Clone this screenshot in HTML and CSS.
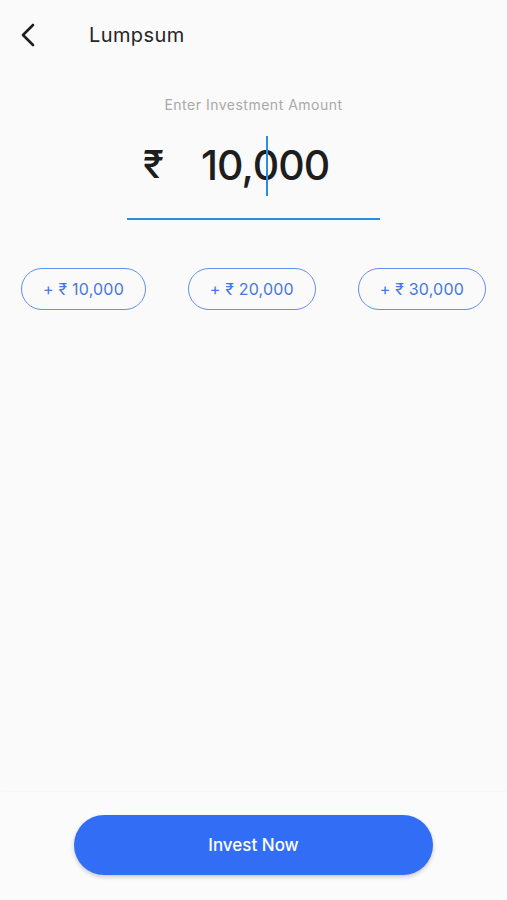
FILE: index.html
```html
<!DOCTYPE html>
<html lang="en">
<head>
  <meta charset="UTF-8" />
  <meta name="viewport" content="width=device-width, initial-scale=1.0"/>
  <title>Lumpsum</title>
  <link rel="stylesheet" href="styles.css">
</head>
<body>
  <div class="screen">
    <!-- Top bar -->
    <header class="topbar">
      <button class="back" aria-label="Back">
        <svg width="18" height="24" viewBox="0 0 18 24">
          <path d="M14 2 L4 12 L14 22" fill="none" stroke="#1e1e1e" stroke-width="2.6" stroke-linecap="round" stroke-linejoin="round"/>
        </svg>
      </button>
      <h1 class="title">Lumpsum</h1>
    </header>

    <!-- Amount entry -->
    <main class="content">
      <p class="label">Enter Investment Amount</p>
      <div class="amount-field">
        <span class="prefix">₹</span>
        <span class="value">10,<span class="caret"></span>000</span>
      </div>

      <div class="chips">
        <button class="chip">+ ₹ 10,000</button>
        <button class="chip">+ ₹ 20,000</button>
        <button class="chip">+ ₹ 30,000</button>
      </div>
    </main>

    <footer class="bottom">
      <button class="invest">Invest Now</button>
    </footer>
  </div>
</body>
</html>
```

FILE: styles.css
```css
html, body {
  margin: 0;
  padding: 0;
  background: #fafafa;
  font-family: Inter, 'Noto Sans', sans-serif;
  color: #1d1d1d;
}

.screen {
  height: 900px;
  display: flex;
  flex-direction: column;
}

.topbar {
  height: 70px;
  display: flex;
  align-items: center;
  padding-left: 17px;
}

.back {
  background: none;
  border: none;
  padding: 0;
  width: 22px;
  height: 24px;
  cursor: pointer;
}

.title {
  margin: 0 0 0 50px;
  font-size: 20px;
  font-weight: 400;
  letter-spacing: 0.4px;
  color: #262626;
}

.content {
  flex: 1;
  display: flex;
  flex-direction: column;
  align-items: center;
}

.label {
  margin: 26px 0 0;
  font-size: 14px;
  color: #a9a9a9;
  letter-spacing: 0.5px;
}

.amount-field {
  width: 253px;
  height: 99px;
  margin-top: 8px;
  border-bottom: 2px solid #2b8de0;
  display: flex;
  align-items: center;
  box-sizing: border-box;
  padding: 0 0 11px 16px;
}

.prefix {
  font-size: 38px;
  font-weight: 500;
  width: 58px;
}

.value {
  font-size: 41px;
  font-weight: 500;
  letter-spacing: -1px;
}

.caret {
  position: relative;
  display: inline-block;
  width: 0;
  height: 1em;
}

.caret::after {
  content: "";
  position: absolute;
  left: 13px;
  top: -3px;
  width: 2px;
  height: 60px;
  background: #2b8de0;
}

.chips {
  align-self: stretch;
  display: flex;
  justify-content: space-between;
  padding: 0 21px;
  margin-top: 48px;
}

.chip {
  height: 42px;
  padding: 0 21px;
  border: 1.5px solid #6390e8;
  border-radius: 21px;
  background: transparent;
  color: #4677df;
  font-family: inherit;
  font-size: 16px;
  letter-spacing: 0.2px;
}

.bottom {
  height: 108px;
  background: #fbfbfb;
  box-shadow: 0 -1px 2px rgba(0, 0, 0, 0.03);
  display: flex;
  justify-content: center;
  padding-top: 23px;
  box-sizing: border-box;
}

.invest {
  width: 359px;
  height: 60px;
  border: none;
  border-radius: 30px;
  background: #326ef5;
  color: #fff;
  font-family: inherit;
  font-size: 17px;
  font-weight: 500;
  box-shadow: 0 2px 4px rgba(0, 0, 0, 0.2);
  cursor: pointer;
}
```
